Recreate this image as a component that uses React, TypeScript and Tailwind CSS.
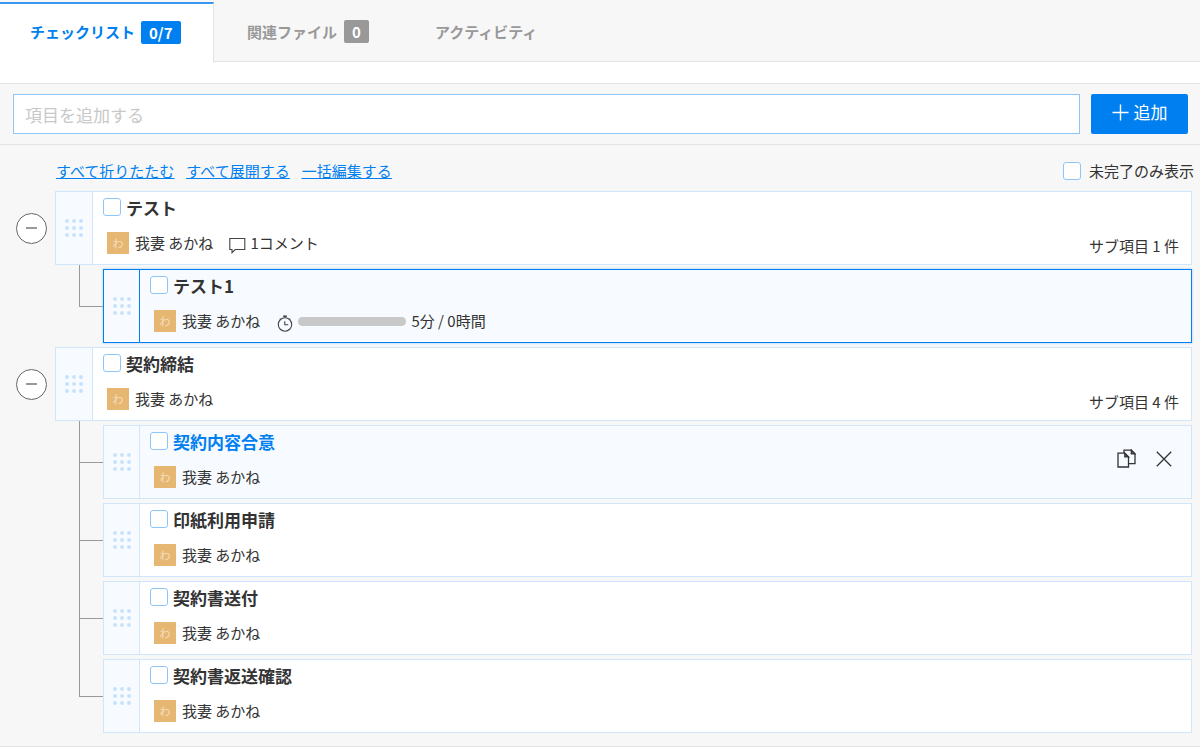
import { useState } from 'react';
import clsx from 'clsx';

type Item = {
  id: string;
  title: string;
  comments?: number;
  time?: string;
  selected?: boolean;
  hovered?: boolean;
  children?: Item[];
};

const items: Item[] = [
  {
    id: 'test',
    title: 'テスト',
    comments: 1,
    children: [{ id: 'test1', title: 'テスト1', time: '5分 / 0時間', selected: true }],
  },
  {
    id: 'contract',
    title: '契約締結',
    children: [
      { id: 'agree', title: '契約内容合意', hovered: true },
      { id: 'stamp', title: '印紙利用申請' },
      { id: 'send', title: '契約書送付' },
      { id: 'return', title: '契約書返送確認' },
    ],
  },
];

const checkboxClass =
  'size-[18px] shrink-0 appearance-none rounded-[3px] border border-[#8fc6fa] bg-white checked:bg-[#0080f0]';

function CommentIcon() {
  return (
    <svg viewBox="0 0 17 17" className="h-[17px] w-[17px]" fill="none" stroke="#444" strokeWidth="1.1">
      <path d="M.8 1.5h15v11H6.2L3 15.7v-3.2H.8z" />
    </svg>
  );
}

function TimerIcon() {
  return (
    <svg viewBox="0 0 16 17" className="h-[17px] w-[16px]" fill="none" stroke="#444" strokeWidth="1.1">
      <circle cx="8" cy="9.5" r="6.7" />
      <path d="M8 2.8V1M7.8 6.2v3.5h3.4M2.8 3.7l.9.9M13.2 3.7l-.9.9" />
      <path d="M6.2 1.2h3.6" strokeWidth="1.6" />
    </svg>
  );
}

function CopyIcon() {
  return (
    <svg viewBox="0 0 19 19" className="size-[19px]" fill="none" stroke="#333" strokeWidth="1.3">
      <path d="M1 4.2h6.8l3.7 3.7V18H1z" />
      <path d="M7.8 4.2v3.7h3.7z" fill="#777" />
      <path d="M7 4V1.2h7.3L18 4.9v9.7h-6.3" />
      <path d="M14.3 1.2v3.7H18z" fill="#777" />
    </svg>
  );
}

function CloseIcon() {
  return (
    <svg viewBox="0 0 16 16" className="size-4" fill="none" stroke="#333" strokeWidth="1.3">
      <path d="M.8.8l14.4 14.4M15.2.8L.8 15.2" />
    </svg>
  );
}

function DragDots() {
  return (
    <svg viewBox="0 0 18 18" className="size-[18px]" fill="#c6e1fb">
      {[2, 9, 16].map((y) => [2, 9, 16].map((x) => <circle key={`${x}-${y}`} cx={x} cy={y} r="1.9" />))}
    </svg>
  );
}

function ItemCard({ item }: { item: Item }) {
  const active = item.selected || item.hovered;
  return (
    <div
      className={clsx(
        'flex h-[74px] min-w-0 flex-1 border',
        item.selected ? 'border-[#0080f0] shadow-[0_0_2px_#8fc6fa]' : 'border-[#cfe6fb]',
        active ? 'bg-[#f7fbff]' : 'bg-white'
      )}
    >
      <button
        type="button"
        aria-label="並べ替え"
        className={clsx(
          'flex shrink-0 items-center justify-center border-r bg-[#f7fbff]',
          item.children ? 'w-[37px]' : 'w-9',
          item.selected ? 'border-[#0080f0]' : 'border-[#cfe6fb]'
        )}
      >
        <DragDots />
      </button>

      <div className="flex min-w-0 flex-1 flex-col pl-2.5">
        <div className="flex h-8 items-center gap-[5px]">
          <input id={item.id} type="checkbox" className={clsx(checkboxClass, 'mb-0.5')} />
          <label
            htmlFor={item.id}
            className={clsx('text-[17px] leading-6 font-bold', item.hovered ? 'text-[#0080f0]' : 'text-[#333]')}
          >
            {item.title}
          </label>
        </div>
        <div className="flex h-[38px] items-center pl-1">
          <span className="flex size-[22px] items-center justify-center bg-[#e6b673] text-[11px] text-[#f6dfbd]">わ</span>
          <span className="ml-1.5">我妻 あかね</span>
          {item.comments && (
            <button type="button" className="ml-4 flex items-center gap-1">
              <span className="pt-1">
                <CommentIcon />
              </span>
              {item.comments}コメント
            </button>
          )}
          {item.time && (
            <span className="ml-[17px] flex items-center gap-[5px]">
              <span className="pt-1">
                <TimerIcon />
              </span>
              <span className="h-[9px] w-[108px] rounded-full bg-[#c8c8c8]" />
              {item.time}
            </span>
          )}
        </div>
      </div>

      {item.children && (
        <p className="self-end pr-3 pb-[7px] leading-[22px]">サブ項目 {item.children.length} 件</p>
      )}
      {item.hovered && (
        <div className="flex items-center gap-5 pr-[19px] pb-[7px]">
          <button type="button" aria-label="複製">
            <CopyIcon />
          </button>
          <button type="button" aria-label="削除">
            <CloseIcon />
          </button>
        </div>
      )}
    </div>
  );
}

function ItemGroup({ item }: { item: Item }) {
  const [open, setOpen] = useState(true);
  const children = item.children ?? [];

  return (
    <li>
      <div className="flex items-center gap-2">
        <button
          type="button"
          aria-label={open ? '折りたたむ' : '展開する'}
          aria-expanded={open}
          onClick={() => setOpen(!open)}
          className="flex size-[31px] shrink-0 items-center justify-center rounded-full border border-[#666] bg-white"
        >
          <span className="h-0.5 w-[11px] bg-[#999]" />
        </button>
        <ItemCard item={item} />
      </div>

      {open && (
        <ul className="pl-[63px]">
          {children.map((child, idx) => (
            <li key={child.id} className="flex">
              {/* Tree connector */}
              <div className="flex w-6 shrink-0 flex-col">
                <div className="h-[42px] border-b border-l border-[#999]" />
                {idx < children.length - 1 && <div className="flex-1 border-l border-[#999]" />}
              </div>
              <div className="flex min-w-0 flex-1 pt-1">
                <ItemCard item={child} />
              </div>
            </li>
          ))}
        </ul>
      )}
    </li>
  );
}

export default function App() {
  return (
    <div className="bg-[#f7f7f7] font-['Noto_Sans_CJK_JP',sans-serif] text-[15px] leading-[22px] text-[#333]">
      {/* Tabs */}
      <nav className="flex h-[62px] pt-0.5 font-bold text-[#999]">
        <button
          type="button"
          className="flex w-[214px] items-center gap-1.5 border-t-2 border-r border-t-[#3a97ee] border-r-[#e3e3e3] bg-white pb-0.5 pl-[30px] text-[#0080f0]"
        >
          チェックリスト
          <span className="rounded-xs bg-[#0080f0] px-2 leading-[23px] text-white">0/7</span>
        </button>
        <div className="flex flex-1 items-center border-b border-[#e3e3e3]">
          <button type="button" className="flex items-center gap-[7px] pl-[33px]">
            関連ファイル
            <span className="rounded-xs bg-[#999] px-2 leading-[23px] text-white">0</span>
          </button>
          <button type="button" className="pl-[66px]">
            アクティビティ
          </button>
        </div>
      </nav>
      <div className="h-[22px] border-b border-[#e3e3e3] bg-white" />

      {/* Add form */}
      <form
        onSubmit={(e) => e.preventDefault()}
        className="flex gap-[11px] border-b border-[#e3e3e3] pt-2.5 pr-3 pb-2.5 pl-[13px]"
      >
        <input
          type="text"
          aria-label="項目を追加する"
          placeholder="項目を追加する"
          className="h-10 min-w-0 flex-1 border border-[#8fc6fa] bg-white px-[11px] text-[17px] placeholder:text-[#c8c8c8]"
        />
        <button
          type="submit"
          className="flex h-10 w-[97px] items-center justify-center gap-[5px] rounded-xs bg-[#0080f0] pb-1 text-[17px] text-white"
        >
          <svg viewBox="0 0 17 17" className="size-[17px]" stroke="currentColor" strokeWidth="1.4">
            <path d="M8.5.5v16M.5 8.5h16" />
          </svg>
          追加
        </button>
      </form>

      <main className="border-b border-[#e3e3e3] pb-[13px]">
        <div className="flex h-[46px] items-center justify-between pt-1.5 pr-1.5 pl-14">
          <div className="flex gap-3 text-[#0080f0] underline">
            <a href="#collapse">すべて折りたたむ</a>
            <a href="#expand">すべて展開する</a>
            <a href="#edit">一括編集する</a>
          </div>
          <label className="flex items-center gap-2">
            <input type="checkbox" className={checkboxClass} />
            未完了のみ表示
          </label>
        </div>

        <ul className="flex flex-col gap-1 pr-2 pl-4">
          {items.map((item) => (
            <ItemGroup key={item.id} item={item} />
          ))}
        </ul>
      </main>
    </div>
  );
}
